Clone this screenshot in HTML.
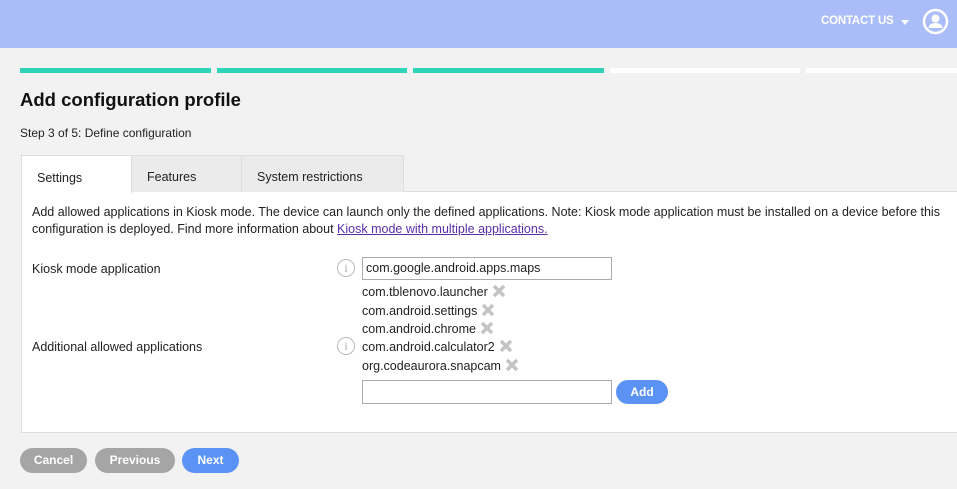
<!DOCTYPE html>
<html><head><style>
*{box-sizing:border-box;margin:0;padding:0}
body{width:957px;height:489px;overflow:hidden;background:#f2f2f2;font-family:"Liberation Sans",sans-serif;font-size:12px;color:#222;position:relative}
.a{position:absolute}
.hdr{left:0;top:0;width:957px;height:48px;background:#abbdf9}
.bar{top:68px;height:5px}
.tab{top:155px;height:37px;background:#ebebeb;border:1px solid #ddd;border-bottom:none;padding:14px 0 0 15px;font-size:12.5px}
.lbl{font-size:12.5px}
.pk{left:362px;font-size:12.5px}
.x{display:inline-block;vertical-align:-2px;margin-left:4px}
.info{width:18px;height:18px;border:1px solid #bbb;border-radius:50%;color:#aaa;font-size:12px;text-align:center;line-height:16px;font-family:"Liberation Serif",serif}
.btn{top:448px;height:25px;border-radius:13px;color:#fff;font-weight:bold;font-size:12px;text-align:center;line-height:25px}
</style></head><body>
<div class="a hdr"></div>
<div class="a" style="left:821px;top:15px;color:#fff;font-weight:bold;font-size:11.5px;letter-spacing:-0.2px">CONTACT US</div>
<div class="a" style="left:901px;top:20px;width:0;height:0;border-left:4px solid transparent;border-right:4px solid transparent;border-top:5px solid #fff"></div>
<svg class="a" style="left:922px;top:8px" width="27" height="27" viewBox="0 0 27 27"><circle cx="13.5" cy="13.5" r="11.5" fill="none" stroke="#fff" stroke-width="2.5"/><circle cx="13.5" cy="10.5" r="4" fill="#fff"/><path d="M6.5 20 Q7 15 13.5 15 Q20 15 20.5 20 Z" fill="#fff"/></svg>
<div class="a bar" style="left:20px;width:191px;background:#2dd4b7"></div>
<div class="a bar" style="left:217px;width:190px;background:#2dd4b7"></div>
<div class="a bar" style="left:413px;width:191px;background:#2dd4b7"></div>
<div class="a bar" style="left:610px;width:190px;background:#fff"></div>
<div class="a bar" style="left:806px;width:151px;background:#fff"></div>
<div class="a" style="left:20px;top:89px;font-size:18.5px;font-weight:bold;color:#111">Add configuration profile</div>
<div class="a" style="left:20px;top:126px;font-size:12px">Step 3 of 5: Define configuration</div>
<div class="a" style="left:21px;top:191px;width:940px;height:242px;background:#fff;border:1px solid #ddd"></div>
<div class="a tab" style="left:131px;width:111px">Features</div>
<div class="a tab" style="left:241px;width:163px">System restrictions</div>
<div class="a tab" style="left:21px;width:111px;background:#fff;height:38px;padding-top:15px">Settings</div>
<div class="a" style="left:32px;top:204px;width:920px;font-size:12.5px;line-height:17px">Add allowed applications in Kiosk mode. The device can launch only the defined applications. Note: Kiosk mode application must be installed on a device before this configuration is deployed. Find more information about <span style="color:#5a2ea6;text-decoration:underline">Kiosk mode with multiple applications.</span></div>
<div class="a lbl" style="left:32px;top:262px">Kiosk mode application</div>
<div class="a lbl" style="left:32px;top:340px">Additional allowed applications</div>
<div class="a info" style="left:337px;top:259px">i</div>
<div class="a info" style="left:337px;top:337px">i</div>
<div class="a" style="left:362px;top:257px;width:250px;height:23px;border:1px solid #aaa;padding:3px 0 0 3px;font-size:12.5px">com.google.android.apps.maps</div>
<div class="a pk" style="top:284px">com.tblenovo.launcher<svg class="x" width="14" height="14"><path d="M2 2L12 12M12 2L2 12" stroke="#c4c4c4" stroke-width="3.5"/></svg></div>
<div class="a pk" style="top:303px">com.android.settings<svg class="x" width="14" height="14"><path d="M2 2L12 12M12 2L2 12" stroke="#c4c4c4" stroke-width="3.5"/></svg></div>
<div class="a pk" style="top:321px">com.android.chrome<svg class="x" width="14" height="14"><path d="M2 2L12 12M12 2L2 12" stroke="#c4c4c4" stroke-width="3.5"/></svg></div>
<div class="a pk" style="top:339px">com.android.calculator2<svg class="x" width="14" height="14"><path d="M2 2L12 12M12 2L2 12" stroke="#c4c4c4" stroke-width="3.5"/></svg></div>
<div class="a pk" style="top:358px">org.codeaurora.snapcam<svg class="x" width="14" height="14"><path d="M2 2L12 12M12 2L2 12" stroke="#c4c4c4" stroke-width="3.5"/></svg></div>
<div class="a" style="left:362px;top:380px;width:250px;height:24px;border:1px solid #aaa;background:#fff"></div>
<div class="a btn" style="left:616px;top:380px;width:52px;height:24px;line-height:24px;background:#5b93f5">Add</div>
<div class="a btn" style="left:20px;width:67px;background:#a5a5a5">Cancel</div>
<div class="a btn" style="left:95px;width:80px;background:#a5a5a5">Previous</div>
<div class="a btn" style="left:182px;width:57px;background:#5b93f5">Next</div>
</body></html>
